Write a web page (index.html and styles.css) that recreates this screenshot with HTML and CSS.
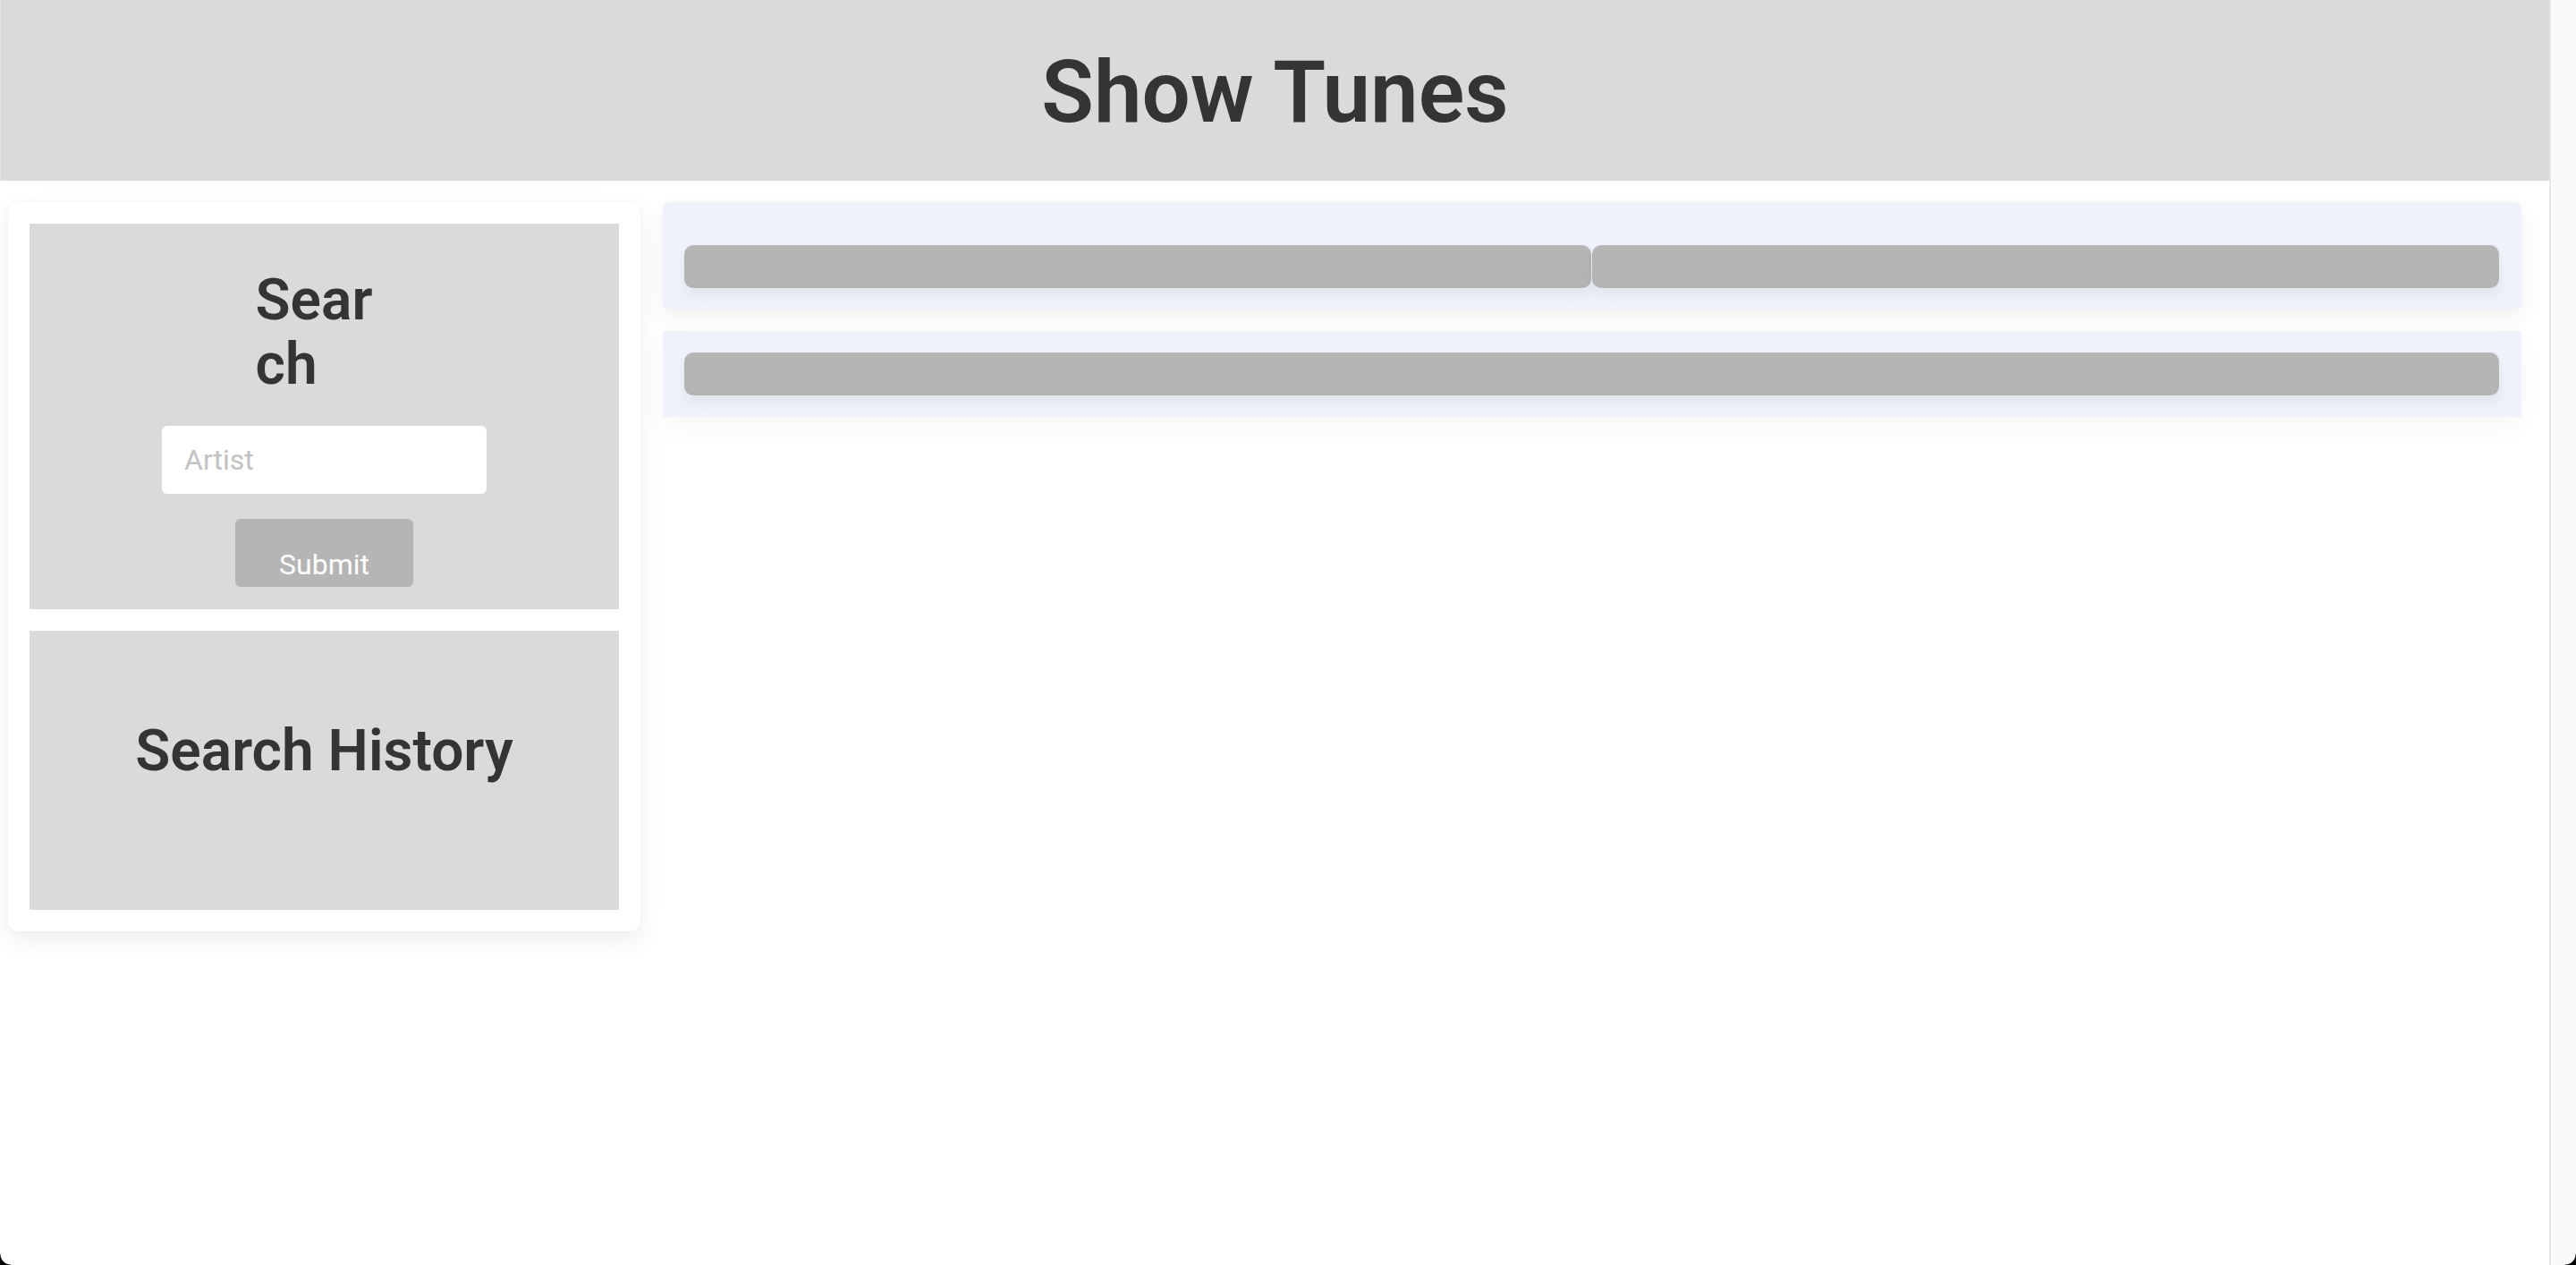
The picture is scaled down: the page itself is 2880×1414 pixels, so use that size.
FILE: index.html
```html
<!DOCTYPE html>
<html lang="en">
<head>
<meta charset="utf-8">
<title>Show Tunes</title>
<link rel="stylesheet" href="styles.css">
</head>
<body>
<div class="app">
  <div class="page">
    <header class="topbar">
      <h1 class="title">Show Tunes</h1>
    </header>
    <main class="main">
      <aside class="sidebar">
        <section class="box search-box">
          <h2 class="box-title search-title">Search</h2>
          <input class="artist-input" type="text" placeholder="Artist">
          <button class="submit-btn" type="button">Submit</button>
        </section>
        <section class="box history-box">
          <h2 class="box-title">Search History</h2>
        </section>
      </aside>
      <div class="results">
        <div class="panel panel-current">
          <div class="bar-row">
            <div class="bar"></div>
            <div class="bar"></div>
          </div>
        </div>
        <div class="panel panel-forecast">
          <div class="bar"></div>
        </div>
      </div>
    </main>
  </div>
  <div class="scroll-track"></div>
  <div class="corner corner-left"></div>
  <div class="corner corner-right"></div>
</div>
</body>
</html>
```
FILE: styles.css
```css
* { box-sizing: border-box; }

html, body {
  margin: 0;
  padding: 0;
  background: #ffffff;
}

body {
  font-family: Roboto, "Liberation Sans", Arial, sans-serif;
  color: #333333;
}

.app {
  display: flex;
  min-height: 100vh;
  width: 100%;
  overflow: hidden;
}

.page {
  width: 2850px;
  flex: none;
}

.scroll-track {
  flex: 1;
  background: #f9f9f9;
  border-left: 2px solid #e6e6e6;
}

.topbar {
  height: 202px;
  background: #dadada;
  padding-top: 47px;
  border-left: 1px solid #e4e4e4;
}

.title {
  margin: 0;
  text-align: center;
  font-size: 96px;
  font-weight: 600;
  line-height: normal;
  color: #343434;
}

.main {
  display: flex;
  align-items: flex-start;
  gap: 25px;
  padding: 24px 0 0 9px;
}

.sidebar {
  width: 707px;
  flex: none;
  background: #ffffff;
  border-radius: 12px;
  padding: 24px;
  display: flex;
  flex-direction: column;
  gap: 24px;
  box-shadow: 0 10px 28px rgba(0, 0, 0, 0.07), 0 0 6px rgba(0, 0, 0, 0.03);
}

.box {
  background: #dadada;
}

.box-title {
  margin: 0;
  font-size: 64px;
  font-weight: 600;
  line-height: 72px;
  color: #343434;
}

.search-box {
  height: 431px;
  display: flex;
  flex-direction: column;
  align-items: center;
}

.search-title {
  width: 154px;
  margin-top: 50px;
  text-align: left;
  word-break: break-all;
}

.artist-input {
  margin-top: 32px;
  width: 363px;
  height: 76px;
  border: none;
  border-radius: 6px;
  background: #ffffff;
  padding: 0 0 0 25px;
  font-family: Roboto, "Liberation Sans", Arial, sans-serif;
  font-size: 32px;
  color: #333333;
  outline: none;
}

.artist-input::placeholder {
  color: #c2c2c2;
}

.submit-btn {
  margin-top: 28px;
  width: 199px;
  height: 76px;
  border: none;
  border-radius: 6px;
  background: #b5b5b5;
  color: #ffffff;
  font-family: Roboto, "Liberation Sans", Arial, sans-serif;
  font-size: 32px;
  line-height: normal;
  padding: 26px 0 0 0;
  display: block;
  text-align: center;
  vertical-align: top;
}

.history-box {
  height: 312px;
  padding-top: 99px;
  text-align: center;
}

.results {
  width: 2078px;
  flex: none;
  display: flex;
  flex-direction: column;
  gap: 24px;
}

.panel {
  background: #eef3fb;
}

.panel-current {
  height: 120px;
  border-radius: 8px;
  padding: 48px 25px 24px 24px;
  box-shadow: 0 10px 26px rgba(0, 0, 0, 0.06), 0 0 4px rgba(0, 0, 0, 0.03);
}

.panel-forecast {
  height: 96px;
  padding: 24px 25px 24px 24px;
  box-shadow: 0 10px 26px rgba(0, 0, 0, 0.04);
}

.bar-row {
  display: flex;
  gap: 1px;
}

.bar {
  flex: 1;
  height: 48px;
  background: #b5b5b5;
  border-radius: 10px;
  box-shadow: 0 8px 16px rgba(0, 0, 0, 0.06);
}

.corner {
  position: fixed;
  bottom: 0;
  width: 12px;
  height: 12px;
}

.corner-left {
  left: 0;
  background: radial-gradient(circle at 12px 0, transparent 11px, #000 12px);
}

.corner-right {
  right: 0;
  background: radial-gradient(circle at 0 0, transparent 11px, #000 12px);
}
```
